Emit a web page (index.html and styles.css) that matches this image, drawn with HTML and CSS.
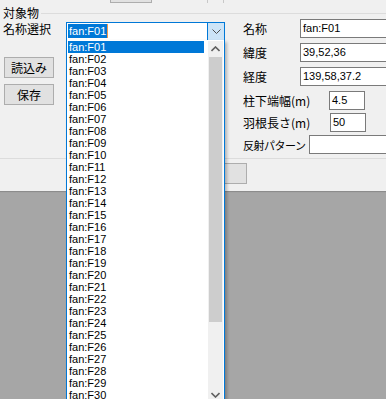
FILE: index.html
```html
<!DOCTYPE html>
<html lang="ja">
<head>
<meta charset="utf-8">
<link rel="stylesheet" href="styles.css">
</head>
<body>
<div class="window">
  <div class="topstrip">
    <div class="tbtn"></div>
    <div class="tline t1"></div>
    <div class="tline t2"></div>
  </div>
  <div class="group">
    <div class="legend">対象物</div>
    <div class="content">
      <div class="leftcol">
        <div class="lbl sel-lbl">名称選択</div>
        <div class="btn b1">読込み</div>
        <div class="btn b2">保存</div>
      </div>
      <div class="combocol">
        <div class="combo">
          <div class="combo-text"><span class="seltext">fan:F01</span><span class="caret"></span></div>
          <div class="combo-arrow">
            <svg width="9" height="6" viewBox="0 0 9 6"><path d="M0.5 0.5 L4.5 4.5 L8.5 0.5" fill="none" stroke="#505050" stroke-width="1"/></svg>
          </div>
        </div>
      </div>
      <div class="rightcol">
        <div class="row r1"><span class="lbl w-name">名称</span><div class="tb wide">fan:F01</div></div>
        <div class="row r2"><span class="lbl w-name">緯度</span><div class="tb wide">39,52,36</div></div>
        <div class="row r3"><span class="lbl w-name">経度</span><div class="tb wide">139,58,37.2</div></div>
        <div class="row r4"><span class="lbl w-pillar">柱下端幅(m)</span><div class="tb small">4.5</div></div>
        <div class="row r5"><span class="lbl w-blade">羽根長さ(m)</span><div class="tb small">50</div></div>
        <div class="row r6"><span class="lbl w-refl">反射パターン</span><div class="tb wide"></div></div>
      </div>
    </div>
  </div>
  <div class="btn lowbtn"></div>
</div>
<div class="dropdown">
  <div class="items">
    <div class="item active">fan:F01</div>
    <div class="item">fan:F02</div>
    <div class="item">fan:F03</div>
    <div class="item">fan:F04</div>
    <div class="item">fan:F05</div>
    <div class="item">fan:F06</div>
    <div class="item">fan:F07</div>
    <div class="item">fan:F08</div>
    <div class="item">fan:F09</div>
    <div class="item">fan:F10</div>
    <div class="item">fan:F11</div>
    <div class="item">fan:F12</div>
    <div class="item">fan:F13</div>
    <div class="item">fan:F14</div>
    <div class="item">fan:F15</div>
    <div class="item">fan:F16</div>
    <div class="item">fan:F17</div>
    <div class="item">fan:F18</div>
    <div class="item">fan:F19</div>
    <div class="item">fan:F20</div>
    <div class="item">fan:F21</div>
    <div class="item">fan:F22</div>
    <div class="item">fan:F23</div>
    <div class="item">fan:F24</div>
    <div class="item">fan:F25</div>
    <div class="item">fan:F26</div>
    <div class="item">fan:F27</div>
    <div class="item">fan:F28</div>
    <div class="item">fan:F29</div>
    <div class="item">fan:F30</div>
  </div>
  <div class="scrollbar">
    <div class="sb-arrow">
      <svg width="9" height="6" viewBox="0 0 9 6"><path d="M0.5 5 L4.5 1 L8.5 5" fill="none" stroke="#606060" stroke-width="1.6"/></svg>
    </div>
    <div class="sb-thumb"></div>
    <div class="sb-track"></div>
    <div class="sb-arrow">
      <svg width="9" height="6" viewBox="0 0 9 6"><path d="M0.5 1 L4.5 5 L8.5 1" fill="none" stroke="#606060" stroke-width="1.6"/></svg>
    </div>
  </div>
</div>
</body>
</html>
```

FILE: styles.css
```css
* { box-sizing: border-box; }
html, body { margin: 0; padding: 0; overflow: hidden; }
body {
  width: 386px;
  height: 399px;
  background: #a6a6a6;
  font-family: "Liberation Sans", "Noto Sans CJK JP", sans-serif;
  font-size: 12px;
  color: #000;
  position: relative;
}
.window {
  height: 191px;
  background: #f0f0f0;
  box-shadow: 0 1px 1px #8c8c8c;
  display: flex;
  flex-direction: column;
}
.topstrip {
  height: 4px;
  display: flex;
  flex-shrink: 0;
}
.tbtn {
  margin-left: 110px;
  width: 42px;
  height: 3px;
  background: #e1e1e1;
  border: 1px solid #adadad;
  border-top: none;
}
.tline {
  width: 1px;
  height: 3px;
  background: #c8c8c8;
}
.t1 { margin-left: 55px; }
.t2 { margin-left: 15px; }
.group {
  position: relative;
  margin-top: 9px;
  height: 146px;
  border-top: 1px solid #dcdcdc;
  border-bottom: 1px solid #dcdcdc;
  flex-shrink: 0;
}
.legend {
  position: absolute;
  left: 0;
  top: -8px;
  padding: 0 2px 0 3px;
  background: #f0f0f0;
  font-family: "Noto Sans CJK JP", sans-serif;
  font-size: 12px;
  line-height: 13px;
}
.content {
  display: flex;
  align-items: flex-start;
}
.lbl {
  font-family: "Noto Sans CJK JP", sans-serif;
  font-size: 12px;
  line-height: 16px;
  white-space: nowrap;
  flex-shrink: 0;
}
.leftcol {
  width: 66px;
  flex-shrink: 0;
  padding-left: 3px;
  display: flex;
  flex-direction: column;
}
.sel-lbl { margin-top: 8px; line-height: 14px; }
.btn {
  width: 50px;
  height: 21px;
  background: #e1e1e1;
  border: 1px solid #adadad;
  font-family: "Noto Sans CJK JP", sans-serif;
  font-size: 12px;
  line-height: 19px;
  text-align: center;
}
.b1 { margin-left: 1px; margin-top: 21px; }
.b2 { margin-left: 1px; margin-top: 6px; }
.combocol { width: 159px; flex-shrink: 0; }
.combo {
  margin-top: 8px;
  height: 19px;
  border: 1px solid #0078d7;
  background: #fff;
  display: flex;
}
.combo-text {
  flex: 1;
  padding: 1px 0 0 1px;
  display: flex;
  align-items: flex-start;
  font-size: 11px;
  line-height: 14px;
}
.seltext {
  background: #0078d7;
  color: #fff;
  padding: 0 1px;
}
.caret {
  width: 1px;
  height: 14px;
  background: #f39a4a;
}
.combo-arrow {
  width: 17px;
  background: #cce4f7;
  border-left: 1px solid #0078d7;
  display: flex;
  align-items: center;
  justify-content: center;
}
.rightcol {
  margin-left: 18px;
  display: flex;
  flex-direction: column;
  flex: 1;
  min-width: 0;
  overflow: hidden;
}
.row {
  display: flex;
  align-items: center;
  height: 19px;
}
.r1 { margin-top: 5px; }
.r2 { margin-top: 5px; }
.r3 { margin-top: 5px; }
.r4 { margin-top: 5px; }
.r5 { margin-top: 3px; }
.r6 { margin-top: 3px; }
.w-name { width: 57px; }
.w-pillar { width: 86px; }
.w-blade { width: 87px; }
.w-refl { width: 66px; font-size: 11px; letter-spacing: -0.5px; }
.tb {
  height: 19px;
  background: #fff;
  border: 1px solid #7a7a7a;
  font-size: 11px;
  line-height: 17px;
  padding-left: 2px;
  white-space: nowrap;
  flex-shrink: 0;
}
.wide { width: 110px; }
.small { width: 36px; }
.lowbtn {
  margin-top: 4px;
  margin-left: 147px;
  width: 100px;
}
.dropdown {
  position: absolute;
  left: 66px;
  top: 40px;
  width: 159px;
  height: 364px;
  background: #fff;
  border: 1px solid #0078d7;
  border-top: none;
  box-shadow: 2px 2px 3px rgba(0,0,0,0.25);
  display: flex;
  padding-top: 1px;
}
.items {
  width: 141px;
  padding-left: 1px;
}
.item {
  width: 136px;
  height: 12px;
  line-height: 12px;
  font-size: 11px;
  padding-left: 1px;
  white-space: nowrap;
}
.item.active {
  background: #0078d7;
  color: #fff;
}
.scrollbar {
  width: 15px;
  background: #f0f0f0;
  display: flex;
  flex-direction: column;
}
.sb-arrow {
  height: 16px;
  display: flex;
  align-items: center;
  justify-content: center;
  flex-shrink: 0;
}
.sb-thumb {
  height: 265px;
  margin: 0 1px;
  background: #cdcdcd;
  flex-shrink: 0;
}
.sb-track { flex: 1; }
```
